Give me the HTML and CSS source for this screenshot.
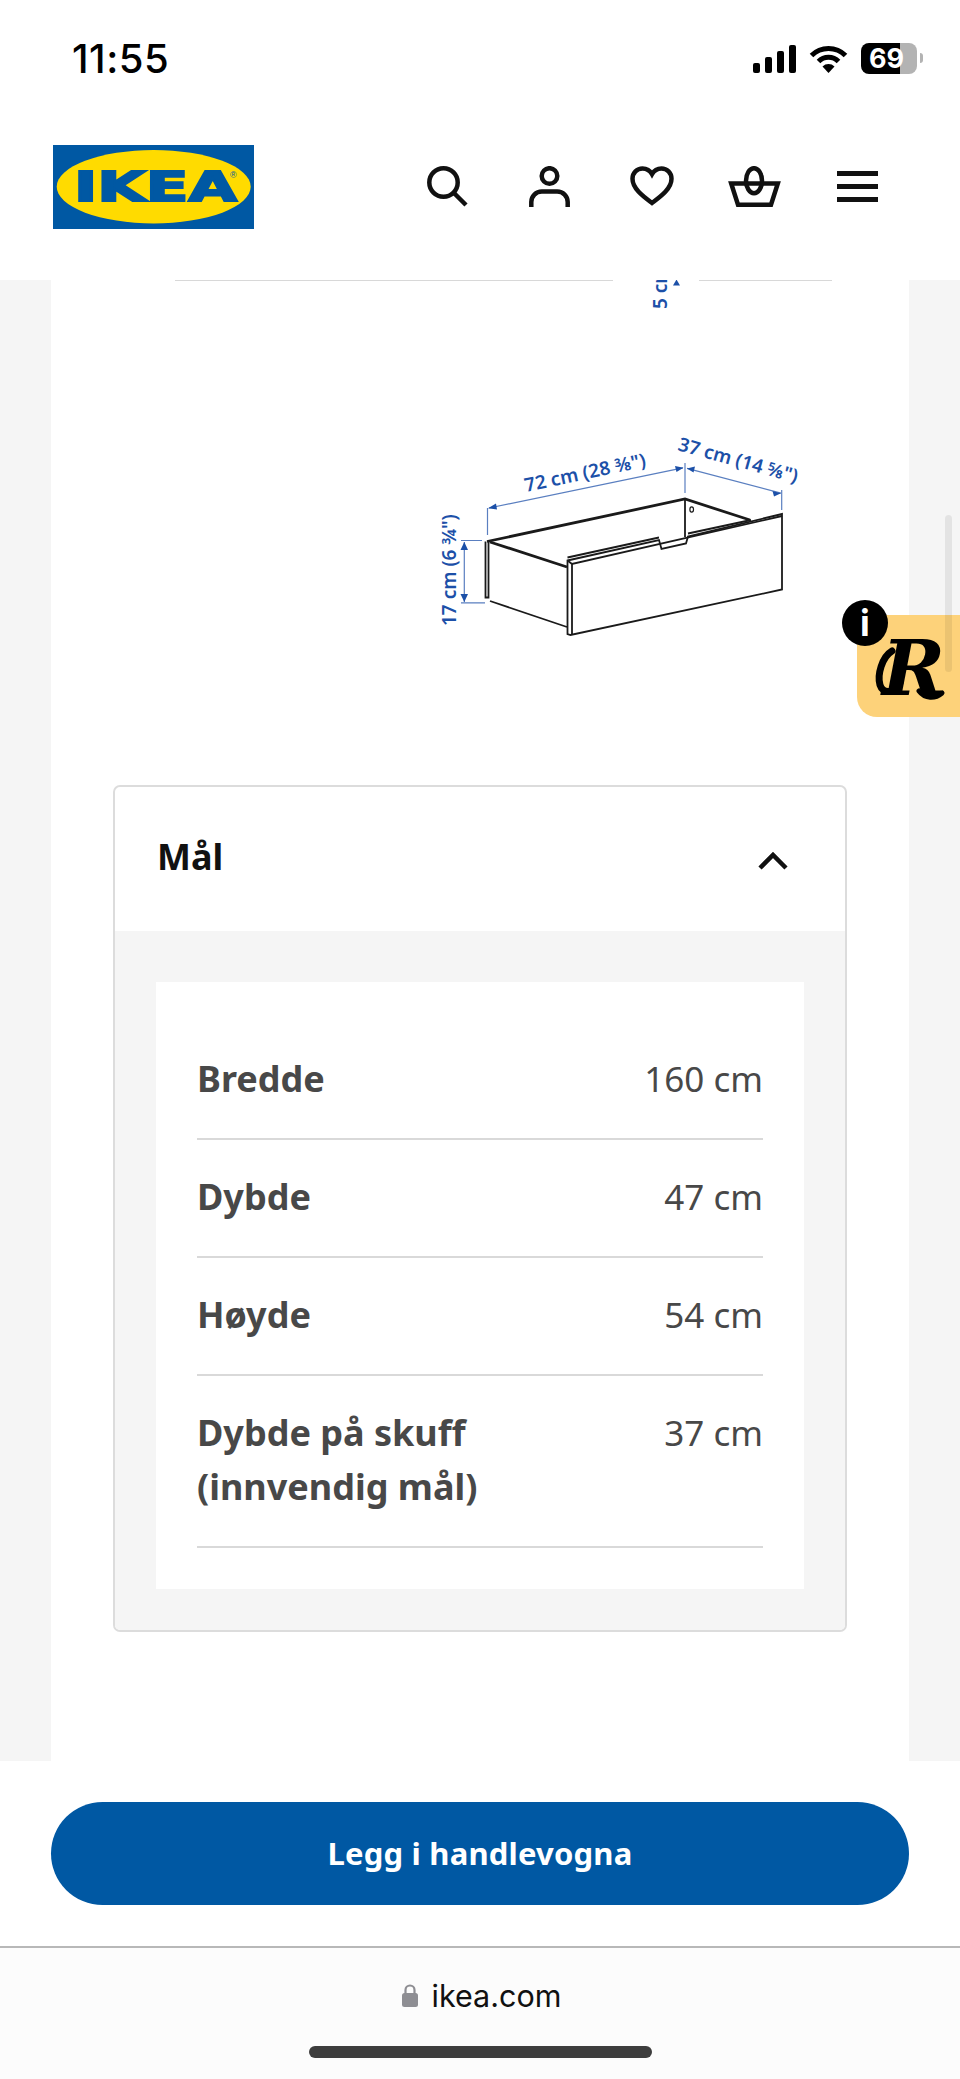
FILE: index.html
```html
<!DOCTYPE html>
<html lang="nb">
<head>
<meta charset="utf-8" />
<title>IKEA - Mål</title>
<link rel="stylesheet" href="styles.css">
</head>
<body>

<div class="statusbar">
  <span class="clock">11:55</span>
  <div class="status-icons">
    <div class="signal">
      <i class="bar bar1"></i>
      <i class="bar bar2"></i>
      <i class="bar bar3"></i>
      <i class="bar bar4"></i>
    </div>
    <svg class="wifi" width="39" height="28" viewBox="0 0 39 28">
      <path d="M2.5 10.5A24 24 0 0 1 36.5 10.5" fill="none" stroke="#000" stroke-width="5" />
      <path d="M9.5 16.5A14 14 0 0 1 29.5 16.5" fill="none" stroke="#000" stroke-width="5" />
      <path d="M13.5 21.5L19.5 28L25.5 21.5A8.5 8.5 0 0 0 13.5 21.5Z" fill="#000" />
    </svg>
    <div class="battery">
      <span class="battery-level">69</span>
      <i class="battery-nub"></i>
    </div>
  </div>
</div>

<header class="header">
  <svg class="logo" width="201" height="84" viewBox="0 0 201 84">
    <rect width="201" height="84" fill="#0058a3" />
    <ellipse cx="100.7" cy="41.7" rx="97" ry="36.7" fill="#ffdb00" />
    <text class="logo-word" x="21" y="56" textLength="163" lengthAdjust="spacingAndGlyphs">IKEA</text>
    <text class="logo-reg" x="177" y="33">®</text>
  </svg>
  <nav class="nav-icons">
    <!-- search -->
    <svg width="41" height="41" viewBox="0 0 41 41">
      <circle cx="16.5" cy="16.5" r="14.2" fill="none" stroke="#111" stroke-width="4.5" />
      <path d="M26.5 26.5L39 39" fill="none" stroke="#111" stroke-width="4.5" />
    </svg>
    <!-- profile -->
    <svg width="41" height="41" viewBox="0 0 41 41">
      <circle cx="20.5" cy="10" r="7.8" fill="none" stroke="#111" stroke-width="4.5" />
      <path d="M2.3 41V36a10.5 10.5 0 0 1 10.5-10.5h15.4a10.5 10.5 0 0 1 10.5 10.5V41" fill="none" stroke="#111" stroke-width="4.5" />
    </svg>
    <!-- favourites -->
    <svg width="44" height="40" viewBox="0 0 44 40">
      <path d="M22 37C14 31 2.5 23 2.5 12.8C2.5 6.8 7 2.5 12.5 2.5C16.5 2.5 20 4.6 22 8.2C24 4.6 27.5 2.5 31.5 2.5C37 2.5 41.5 6.8 41.5 12.8C41.5 23 30 31 22 37Z" fill="none" stroke="#111" stroke-width="4.5" />
    </svg>
    <!-- shopping bag -->
    <svg width="53" height="41" viewBox="0 0 53 41">
      <path d="M3.2 17.5H49.8L43 38.7H10Z" fill="none" stroke="#111" stroke-width="4.5" />
      <ellipse cx="26" cy="14.7" rx="8" ry="12.5" fill="none" stroke="#111" stroke-width="4.5" />
    </svg>
    <!-- menu -->
    <svg class="menu" width="41" height="31" viewBox="0 0 41 31">
      <rect width="41" height="5" fill="#111" />
      <rect y="13" width="41" height="5" fill="#111" />
      <rect y="26" width="41" height="5" fill="#111" />
    </svg>
  </nav>
</header>

<div class="page">
  <main class="sheet">
    <!-- measure drawing, coordinates are page pixels -->
    <svg class="drawing" width="858" height="505" viewBox="51 280 858 505">
      <g class="thin">
        <path d="M175 280.5H613M699 280.5H832" />
      </g>
      <text class="dim" transform="translate(667 309) rotate(-90)">5 cm</text>
      <path class="dim-fill" d="M673 285.5L676.5 279.5L680 285.5Z" />

      <g class="dim-line">
        <path d="M487.5 508V535M685 463V493M781.7 490V510" />
        <path d="M489 508L683 467.8M687 468.4L781 493.2" />
        <path d="M464.3 542V602M461 540.5H482M461 602.8H485" />
      </g>
      <path class="dim-fill" d="M488 508.2L496 503.5L497 509.5ZM683.5 467.7L675 466L676.5 472ZM687 468.5L695 466.5L693.5 472.5ZM781 493.3L772.5 491L774 496.5ZM464.3 542L460.5 550H468ZM464.3 602L460.5 594H468Z" />
      <text class="dim" transform="translate(526 492) rotate(-12)">72 cm (28 ⅜")</text>
      <text class="dim" transform="translate(677 450) rotate(15.5)">37 cm (14 ⅝")</text>
      <text class="dim" transform="translate(456 626) rotate(-90)">17 cm (6 ¾")</text>

      <g class="box">
        <path class="heavy" d="M487 541.5L685 499L750 520" />
        <path class="heavy" d="M490 542L567 567" />
        <path d="M485.5 541.5V597.5H488.5V541.5" />
        <path d="M490 601L567 627" />
        <path d="M685 499V537" />
        <path d="M567.5 560.5L659 540L661.5 549L686 543.5L688 536.5L782 514V589.5L570.5 635L567.5 634Z" fill="#fff" />
        <path d="M572 564V634M567.5 560.5L572 564L782 516" />
        <path d="M567.5 557.5L659 537.5M688 533.5L751 520" />
        <ellipse cx="691.7" cy="509.5" rx="1.8" ry="2.6" fill="none" />
      </g>
    </svg>

    <section class="accordion">
      <div class="accordion-head">
        <h2 class="accordion-title">Mål</h2>
        <svg class="chevron" width="30" height="19" viewBox="0 0 30 19">
          <path d="M2 17L15 4L28 17" fill="none" stroke="#111" stroke-width="4.5" />
        </svg>
      </div>
      <div class="accordion-body">
        <dl class="measures">
          <div class="measure">
            <dt>Bredde</dt>
            <dd>160 cm</dd>
          </div>
          <div class="measure">
            <dt>Dybde</dt>
            <dd>47 cm</dd>
          </div>
          <div class="measure">
            <dt>Høyde</dt>
            <dd>54 cm</dd>
          </div>
          <div class="measure">
            <dt>Dybde på skuff<br />(innvendig mål)</dt>
            <dd>37 cm</dd>
          </div>
        </dl>
      </div>
    </section>
  </main>
</div>

<div class="cta">
  <button class="cta-button">Legg i handlevogna</button>
</div>

<div class="browserbar">
  <div class="address">
    <svg width="16" height="23" viewBox="0 0 16 23">
      <path d="M3.5 10V6a4.5 4.5 0 0 1 9 0V10" fill="none" stroke="#8e8e93" stroke-width="2.2" />
      <rect y="9" width="16" height="14" rx="2.5" fill="#8e8e93" />
    </svg>
    <span>ikea.com</span>
  </div>
  <div class="home-indicator"></div>
</div>

<!-- reviews tab floating over the right edge -->
<div class="reviews-tab">
  <svg width="103" height="102" viewBox="0 0 103 102">
    <text class="reviews-r" x="25" y="80">R</text>
    <path d="M35 36C25 42 20 60 23 70C26 80 38 78 43 68" fill="none" stroke="#000" stroke-width="7" stroke-linecap="round" />
    <path d="M62 76C68 84 78 84 85 78" fill="none" stroke="#000" stroke-width="5" stroke-linecap="round" />
  </svg>
</div>
<div class="reviews-info"><span>i</span></div>
<div class="scroll-thumb"></div>

</body>
</html>
```

FILE: styles.css
```css
* {
  box-sizing: border-box;
  margin: 0;
  padding: 0;
}
html, body {
  height: 2079px;
  overflow: hidden;
}
body {
  background: #fff;
  color: #111;
  display: flex;
  flex-direction: column;
  font-family: 'Noto Sans', sans-serif;
  position: relative;
  width: 960px;
}

/* phone status bar */
.statusbar {
  align-items: flex-start;
  display: flex;
  height: 145px;
  justify-content: space-between;
  padding: 36px 43px 0 72px;
}
.clock {
  color: #000;
  font-family: 'Inter', sans-serif;
  font-size: 40px;
  font-weight: 500;
  letter-spacing: 0.5px;
  line-height: 46px;
}
.status-icons {
  align-items: flex-start;
  display: flex;
  padding-top: 7px;
}
.signal {
  align-items: flex-end;
  display: flex;
  gap: 4.5px;
  height: 28px;
  margin-right: 13px;
  margin-top: 2px;
  width: 43px;
}
.bar {
  background: #000;
  border-radius: 2px;
  display: block;
  width: 7.5px;
}
.bar1 { height: 10px; }
.bar2 { height: 16px; }
.bar3 { height: 22px; }
.bar4 { height: 28px; }
.wifi {
  margin-right: 13px;
  margin-top: 2px;
}
.battery {
  background: linear-gradient(90deg, #000 0, #000 39px, #b3b3b3 39px, #b3b3b3 100%);
  border-radius: 8px;
  height: 31px;
  position: relative;
  width: 56px;
}
.battery-level {
  color: #fff;
  display: block;
  font-family: 'Inter', sans-serif;
  font-size: 27px;
  font-weight: 700;
  line-height: 31px;
  padding-left: 8px;
}
.battery-nub {
  background: #b3b3b3;
  border-radius: 0 4px 4px 0;
  display: block;
  height: 10px;
  position: absolute;
  right: -6px;
  top: 10px;
  width: 3px;
}

/* site header */
.header {
  display: flex;
  height: 135px;
  justify-content: space-between;
  padding: 0 82px 0 53px;
}
.logo {
  display: block;
}
.logo-word {
  fill: #0058a3;
  font-family: 'DejaVu Sans', sans-serif;
  font-size: 41px;
  font-weight: 700;
  stroke: #0058a3;
  stroke-width: 2px;
}
.logo-reg {
  fill: #0058a3;
  font-family: 'Liberation Sans', sans-serif;
  font-size: 9px;
}
.nav-icons {
  align-items: start;
  display: grid;
  grid-template-columns: 102px 101px 98px 109px 41px;
  padding-top: 21px;
  width: 451px;
}
.menu {
  margin-top: 5px;
}

/* product sheet */
.page {
  background: #f5f5f5;
  height: 1481px;
  padding: 0 51px;
}
.sheet {
  background: #fff;
  height: 100%;
}
.drawing {
  display: block;
}
.thin path {
  fill: none;
  stroke: #d8d8d8;
  stroke-width: 1;
}
.dim {
  fill: #1c50a8;
  font-family: 'Noto Sans', sans-serif;
  font-size: 19px;
  font-weight: 600;
}
.dim-fill {
  fill: #1c50a8;
}
.dim-line path {
  fill: none;
  stroke: #5a7fc0;
  stroke-width: 1.2;
}
.box path {
  fill: none;
  stroke: #1a1a1a;
  stroke-width: 1.8;
}
.box path.heavy {
  stroke-width: 2.8;
}
.box ellipse {
  stroke: #1a1a1a;
  stroke-width: 1.2;
}

/* dimensions accordion */
.accordion {
  border: 2px solid #dcdcdc;
  border-radius: 7px;
  height: 847px;
  margin: 0 62px;
  overflow: hidden;
}
.accordion-head {
  align-items: center;
  display: flex;
  height: 144px;
  justify-content: space-between;
  padding: 0 57px 0 42px;
}
.accordion-title {
  font-size: 36px;
  font-weight: 700;
  line-height: 48px;
  margin-top: -4px;
}
.chevron {
  margin-top: 2px;
}
.accordion-body {
  background: #f5f5f5;
  height: 701px;
  padding: 51px 41px;
}
.measures {
  background: #fff;
  color: #484848;
  height: 607px;
  padding: 40px 41px;
}
.measure {
  border-bottom: 2px solid #d9d9d9;
  display: flex;
  font-size: 35px;
  justify-content: space-between;
  line-height: 54px;
  padding: 30px 0 32px;
}
.measure dt {
  font-size: 36px;
  font-weight: 700;
}
.measure dd {
  font-weight: 400;
}

/* add to cart */
.cta {
  padding: 41px 51px;
  height: 185px;
}
.cta-button {
  background: #0058a3;
  border: 0 none;
  border-radius: 52px;
  color: #fff;
  display: block;
  font-family: 'Noto Sans', sans-serif;
  font-size: 31px;
  font-weight: 700;
  height: 103px;
  letter-spacing: 0.2px;
  padding-bottom: 2px;
  width: 100%;
}

/* browser address bar */
.browserbar {
  background: #fcfcfc;
  border-top: 2px solid #b8b8b8;
  height: 133px;
  padding-top: 29px;
}
.address {
  align-items: center;
  color: #111;
  display: flex;
  font-family: 'Inter', sans-serif;
  font-size: 30.5px;
  gap: 14px;
  height: 36px;
  justify-content: center;
  padding-left: 3px;
}
.home-indicator {
  background: #3d3d3d;
  border-radius: 6px;
  height: 12px;
  margin: 33px 0 0 309px;
  width: 343px;
}

/* floating bits over the page */
.reviews-tab {
  background: #fdd27a;
  border-radius: 14px 0 0 20px;
  height: 102px;
  left: 857px;
  position: absolute;
  top: 615px;
  width: 103px;
}
.reviews-r {
  fill: #000;
  font-family: 'DejaVu Serif', serif;
  font-size: 76px;
  font-style: italic;
  font-weight: 700;
}
.reviews-info {
  align-items: center;
  background: #000;
  border-radius: 50%;
  color: #fff;
  display: flex;
  font-family: 'Inter', sans-serif;
  font-size: 36px;
  font-weight: 700;
  height: 46px;
  justify-content: center;
  left: 842px;
  position: absolute;
  top: 600px;
  width: 46px;
}
.scroll-thumb {
  background: rgba(0, 0, 0, .07);
  border-radius: 4px;
  height: 157px;
  left: 945px;
  position: absolute;
  top: 515px;
  width: 7px;
}
```
